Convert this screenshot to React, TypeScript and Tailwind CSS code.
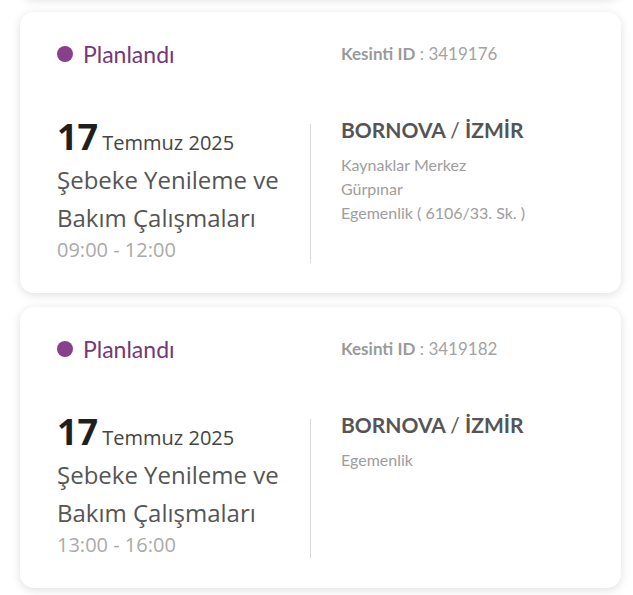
const outages = [
  {
    id: '3419176',
    day: '17',
    month: 'Temmuz 2025',
    title: 'Şebeke Yenileme ve Bakım Çalışmaları',
    hours: '09:00 - 12:00',
    district: 'BORNOVA',
    city: 'İZMİR',
    streets: ['Kaynaklar Merkez', 'Gürpınar', 'Egemenlik ( 6106/33. Sk. )'],
  },
  {
    id: '3419182',
    day: '17',
    month: 'Temmuz 2025',
    title: 'Şebeke Yenileme ve Bakım Çalışmaları',
    hours: '13:00 - 16:00',
    district: 'BORNOVA',
    city: 'İZMİR',
    streets: ['Egemenlik'],
  },
];

function OutageCard({ item }) {
  return (
    <div className="w-[601px] h-[281px] shrink-0 rounded-[14px] bg-white shadow-[0_2px_10px_rgba(0,0,0,0.13)] pt-[30px] pl-[37px]">
      <div className="flex h-[24px] items-center">
        <div className="flex w-[284px] items-center gap-[10px]">
          <span className="h-[16px] w-[16px] rounded-full bg-[#8a3f8d]" />
          <span className="font-['Lato'] text-[23px] text-[#74387a]">Planlandı</span>
        </div>
        <p className="font-['Lato'] text-[17px] text-[#a3a3a3]">
          <span className="font-bold text-[#9a9a9a]">Kesinti ID</span> : {item.id}
        </p>
      </div>

      <div className="mt-[50px] flex">
        <div className="w-[253px] font-['Open_Sans']">
          <p className="h-[45px] leading-[41px]">
            <span className="text-[36px] font-bold text-[#1f1f1f]">{item.day}</span>{' '}
            <span className="text-[20px] text-[#444]">{item.month}</span>
          </p>
          <p className="w-[240px] text-[24px] leading-[38px] text-[#555]">{item.title}</p>
          <p className="text-[20px] leading-[25px] text-[#aaa]">{item.hours}</p>
        </div>
        <div className="mt-[8px] h-[139px] w-px bg-[#d9d9d9]" />
        <div className="pl-[30px] font-['Lato']">
          <p className="text-[21px] font-bold leading-[28px] text-[#555]">
            {item.district} <span className="font-normal">/</span> {item.city}
          </p>
          <div className="mt-[9px] text-[16px] leading-[24px] text-[#9d9d9d]">
            {item.streets.map((s) => (
              <p key={s}>{s}</p>
            ))}
          </div>
        </div>
      </div>
    </div>
  );
}

export default function App() {
  return (
    <div className="h-[595px] overflow-hidden bg-white pl-[20px]">
      <div className="flex flex-col gap-[14px]">
        <div className="-mt-[282px] h-[280px] w-[601px] rounded-[14px] bg-white shadow-[0_2px_10px_rgba(0,0,0,0.13)]" />
        {outages.map((item) => (
          <OutageCard key={item.id} item={item} />
        ))}
      </div>
    </div>
  );
}
